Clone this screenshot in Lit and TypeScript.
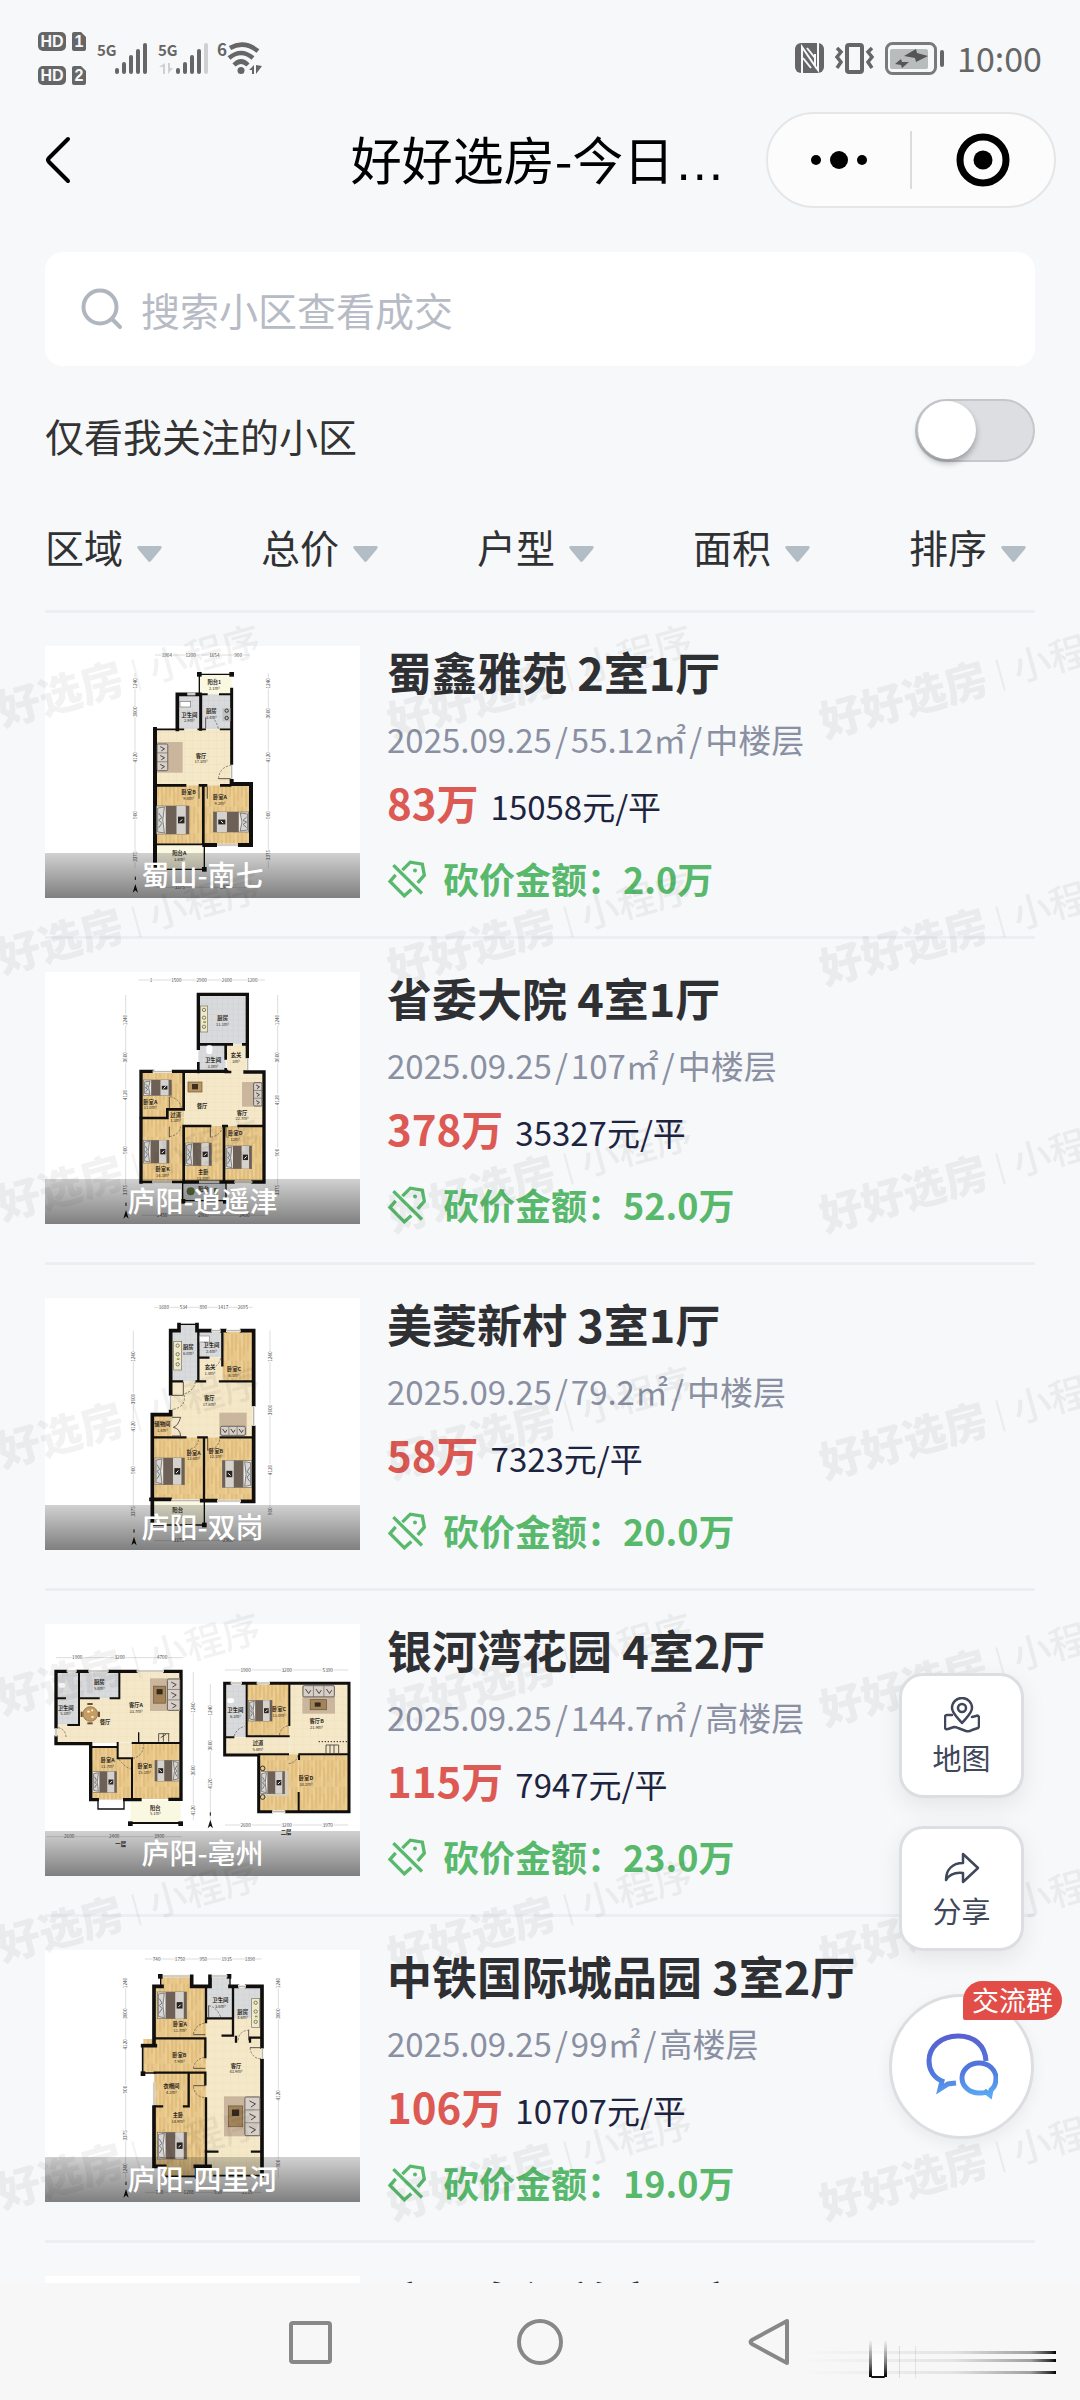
import { LitElement, html, svg, css, nothing } from "lit";
import { customElement, property, state } from "lit/decorators.js";

interface Listing {
  plan: string;
  place: string;
  title: string;
  date: string;
  area: string;
  floor: string;
  price: string;
  unit: string;
  cut: string;
}

const LISTINGS: Listing[] = [
  { plan: "shushan", place: "蜀山-南七", title: "蜀鑫雅苑 2室1厅", date: "2025.09.25", area: "55.12㎡", floor: "中楼层", price: "83万", unit: "15058元/平", cut: "2.0万" },
  { plan: "xiaoyao", place: "庐阳-逍遥津", title: "省委大院 4室1厅", date: "2025.09.25", area: "107㎡", floor: "中楼层", price: "378万", unit: "35327元/平", cut: "52.0万" },
  { plan: "shuanggang", place: "庐阳-双岗", title: "美菱新村 3室1厅", date: "2025.09.25", area: "79.2㎡", floor: "中楼层", price: "58万", unit: "7323元/平", cut: "20.0万" },
  { plan: "bozhou", place: "庐阳-亳州", title: "银河湾花园 4室2厅", date: "2025.09.25", area: "144.7㎡", floor: "高楼层", price: "115万", unit: "7947元/平", cut: "23.0万" },
  { plan: "silihe", place: "庐阳-四里河", title: "中铁国际城品园 3室2厅", date: "2025.09.25", area: "99㎡", floor: "高楼层", price: "106万", unit: "10707元/平", cut: "19.0万" },
  { plan: "", place: "", title: "文一名门首府 3室2厅", date: "", area: "", floor: "", price: "", unit: "", cut: "" },
];

type Fill = "wood" | "tile" | "wet" | "pale";
const room = (kind: Fill, x: number, y: number, w: number, h: number) =>
  svg`<rect x=${x} y=${y} width=${w} height=${h} fill=${`url(#${kind})`} />`;
const wall = (d: string, w = 10) =>
  svg`<path d=${d} stroke="#100f0d" stroke-width=${w} stroke-linecap="square" fill="none" />`;
const thin = (d: string) => svg`<path d=${d} stroke="#3c3a36" stroke-width="2.5" fill="none" />`;
const gap = (d: string) =>
  svg`<path d=${d} stroke="#f3f1ea" stroke-width="8" fill="none" /><path d=${d} stroke="#8b8983" stroke-width="2" fill="none" />`;
const arc = (d: string) =>
  svg`<path d=${d} stroke="#5b5142" stroke-width="2" stroke-dasharray="7 4" fill="none" />`;
const post = (x: number, y: number) => svg`<rect x=${x - 7} y=${y - 7} width="14" height="14" fill="#100f0d" />`;
const name = (x: number, y: number, text: string, size: string) => svg`
  <text x=${x} y=${y} class="room">${text}</text>
  <text x=${x} y=${y + 17} class="size">${size}</text>`;

/* Bed with its pillows on the left; flip puts them on the right. */
const bed = (x: number, y: number, w: number, h: number, flip = false) => svg`
  <g transform=${flip ? `translate(${x + w} ${y}) scale(-1 1)` : `translate(${x} ${y})`}>
    <rect width=${w} height=${h} fill="#ece9e4" stroke="#6f6a62" stroke-width="2" />
    <path d=${`M3 6 L${w * 0.24} 3 L${w * 0.19} ${h / 2} L${w * 0.24} ${h - 3} L3 ${h - 6} Z`} fill="#d8d6d2" stroke="#55524d" stroke-width="2" />
    <path d=${`M6 ${h * 0.25} L${w * 0.16} ${h * 0.42} L6 ${h * 0.5} L${w * 0.16} ${h * 0.62} L6 ${h * 0.78}`} fill="none" stroke="#6d7d8a" stroke-width="3" />
    <rect x=${w * 0.28} width=${w * 0.34} height=${h} fill="#6d6056" />
    <rect x=${w * 0.62} width=${w * 0.28} height=${h} fill="#d5d1cc" />
    <rect x=${w * 0.9} width=${w * 0.1} height=${h} fill="#6d6056" />
    <rect x=${w * 0.66} y=${h * 0.38} width=${w * 0.2} height=${h * 0.24} fill="#26221f" />
    <path d=${`M${w * 0.72} ${h * 0.56} l7 -7`} stroke="#fff" stroke-width="3" />
  </g>`;

/* Sofa on a rug; side tells which edge of the rug the sofa stands on. */
const sofa = (x: number, y: number, w: number, h: number, side: "left" | "right" | "top" | "bottom", table = false) => {
  const d = side === "left" || side === "right" ? w * 0.42 : h * 0.4;
  const b =
    side === "left" ? [x, y + 6, d, h - 12] :
    side === "right" ? [x + w - d, y + 2, d, h - 4] :
    side === "top" ? [x + 2, y, w - 4, d] : [x + 4, y + h - d, w - 8, d];
  const vertical = side === "left" || side === "right";
  return svg`
    <rect x=${x} y=${y} width=${w} height=${h} fill="#c9b69d" />
    <rect x=${b[0]} y=${b[1]} width=${b[2]} height=${b[3]} rx="4" fill="#d7cfc8" stroke="#55504c" stroke-width="2.5" />
    ${[1, 2].map((i) => vertical
      ? svg`<path d=${`M${b[0]} ${b[1] + (b[3] * i) / 3} h${b[2]}`} stroke="#6b6560" stroke-width="2" />`
      : svg`<path d=${`M${b[0] + (b[2] * i) / 3} ${b[1]} v${b[3]}`} stroke="#6b6560" stroke-width="2" />`)}
    ${[0, 1, 2].map((i) => vertical
      ? svg`<path d=${`M${b[0] + b[2] * 0.3} ${b[1] + b[3] * (i / 3 + 0.1)} l${b[2] * 0.4} ${b[3] * 0.08} l${-b[2] * 0.3} ${b[3] * 0.08}`} stroke="#4a4643" stroke-width="3" fill="none" />`
      : svg`<path d=${`M${b[0] + b[2] * (i / 3 + 0.08)} ${b[1] + b[3] * 0.3} l${b[2] * 0.1} ${b[3] * 0.4} l${b[2] * 0.07} ${-b[3] * 0.3}`} stroke="#4a4643" stroke-width="3" fill="none" />`)}
    ${table ? (vertical
      ? svg`<rect x=${x + w * 0.12} y=${y + h * 0.24} width=${w * 0.4} height=${h * 0.52} fill="#a2835a" stroke="#6b5336" stroke-width="2" /><rect x=${x + w * 0.22} y=${y + h * 0.33} width=${w * 0.2} height=${h * 0.16} fill="#33291f" />`
      : svg`<rect x=${x + w * 0.24} y=${y + h * 0.5} width=${w * 0.5} height=${h * 0.36} fill="#a2835a" stroke="#6b5336" stroke-width="2" /><rect x=${x + w * 0.38} y=${y + h * 0.6} width=${w * 0.18} height=${h * 0.15} fill="#33291f" />`) : nothing}`;
};

const stove = (x: number, y: number, w: number, h: number) => svg`
  <rect x=${x} y=${y} width=${w} height=${h} fill="#efe9c6" stroke="#77736a" stroke-width="2" />
  ${[0.15, 0.45, 0.8].map((t) => svg`<circle cx=${x + w / 2} cy=${y + h * t} r="5" fill="none" stroke="#4b4a45" stroke-width="2" />`)}
  <path d=${`M${x + w * 0.4} ${y + h * 0.62} h8`} stroke="#86a03c" stroke-width="5" />`;

/* Dimension chain along the top or the bottom edge. */
const across = (y: number, x1: number, x2: number, labels: string[]) => {
  const step = (x2 - x1) / labels.length;
  return svg`<path d=${`M${x1} ${y} H${x2}`} class="dim" />
    ${labels.map((t, i) => svg`<text x=${x1 + step * (i + 0.5)} y=${y + 5} class="mark">${t}</text>`)}`;
};
/* Dimension chain along the left or the right edge. */
const down = (x: number, y1: number, y2: number, marks: number[]) => svg`
  <path d=${`M${x} ${y1} V${y2}`} class="dim" />
  ${marks.map((y, i) => svg`<text transform=${`translate(${x + 5} ${y}) rotate(-90)`} class="mark">${["1240", "3600", "4120", "900", "3375"][i % 5]}</text>`)}`;
const north = (x: number, y: number) =>
  svg`<path d=${`M${x} ${y - 22} l8 26 l-8 -7 l-8 7 Z`} fill="#111" /><path d=${`M${x} ${y - 34} v-10`} stroke="#111" stroke-width="3" />`;

const PLANS: Record<string, { box: string; art: unknown }> = {
  shushan: {
    box: "135 78 945 756",
    art: svg`
      ${across(105, 465, 750, ["1904", "1200", "1654", "900"])}
      ${down(405, 160, 745, [190, 275, 412, 585, 710])}
      ${down(805, 160, 745, [190, 280, 412, 585, 705])}
      ${room("pale", 598, 163, 97, 60)}${room("wet", 532, 223, 70, 105)}${room("wet", 602, 223, 93, 105)}
      ${room("tile", 465, 328, 230, 168)}${room("wood", 465, 496, 145, 177)}${room("wood", 610, 496, 143, 180)}${room("pale", 465, 675, 148, 72)}
      ${wall("M598 163 H695 M598 163 V220", 4)}${post(598, 163)}${post(695, 163)}
      ${wall("M532 328 V223 H600", 11)}${wall("M695 208 V430 M602 225 V328", 9)}${wall("M605 223 H620 M660 223 H690", 6)}
      ${wall("M465 743 V327 M695 483 V492 H753 V675 H720 M645 675 H613", 12)}${wall("M470 496 H555 M600 496 H618 M664 496 H690 M610 496 V672", 8)}
      ${wall("M470 328 H550 M595 328 H615 M662 328 H690 M470 673 H605", 5)}${wall("M613 680 V748 H466", 4)}${post(613, 748)}
      ${gap("M562 222 H586")}${gap("M651 675 H714")}${gap("M695 436 V476")}
      ${arc("M655 476 Q660 440 694 436")}${arc("M655 326 Q650 305 640 295")}${thin("M655 476 H692 M617 292 V326 M622 500 V536 M597 500 V536")}
      <rect x="540" y="244" width="32" height="17" fill="#fff" stroke="#777" stroke-width="2" />
      <rect x="667" y="264" width="24" height="40" fill="#bfc2c3" /><circle cx="680" cy="272" r="5" class="ring" /><circle cx="680" cy="294" r="5" class="ring" />
      ${sofa(471, 366, 77, 92, "left")}${bed(470, 558, 97, 84)}${bed(640, 576, 106, 60, true)}
      ${name(643, 192, "阳台1", "2.1m²")}${name(568, 290, "卫生间", "2.9m²")}${name(634, 280, "厨房", "3.4m²")}
      ${name(603, 413, "客厅", "17.3m²")}${name(566, 522, "卧室B", "9.8m²")}${name(660, 538, "卧室A", "9.2m²")}${name(538, 706, "阳台A", "3.6m²")}
      ${across(802, 470, 745, ["3375", "2900"])}${north(406, 814)}`,
  },
  xiaoyao: {
    box: "45 66 945 756",
    art: svg`
      ${across(90, 325, 705, ["1", "1500", "2900", "2600", "1200"])}
      ${down(287, 135, 730, [210, 322, 435, 600, 720])}${down(743, 135, 730, [210, 322, 450, 608, 720])}
      ${room("wet", 505, 133, 148, 150)}${room("wet", 505, 283, 82, 83)}${room("tile", 590, 283, 62, 85)}
      ${room("tile", 460, 366, 244, 162)}${room("tile", 412, 478, 52, 50)}${room("wood", 333, 366, 128, 136)}${room("wood", 333, 504, 128, 190)}
      ${room("wood", 462, 528, 120, 166)}${room("wood", 583, 528, 118, 168)}${room("wet", 458, 698, 130, 56)}
      ${wall("M505 295 V133 H652 V320", 10)}${wall("M510 283 H605 M640 283 H650 M587 283 V325 M505 340 V366 M587 358 V366 H600", 8)}
      ${wall("M333 696 V364 H368 M430 364 H590 M645 366 H702 V696 H668 M583 696 H462 M610 696 H583", 10)}
      ${wall("M461 366 V478 H412 V504 H333 M461 528 H540 M580 528 H590 M626 528 H700 M461 528 V694 M582 528 V694 M333 696 H365 M430 696 H461", 8)}
      ${gap("M368 365 H426")}${gap("M653 325 V360")}${gap("M366 696 H426")}${gap("M507 696 H568")}${gap("M613 696 H667")}
      ${wall("M458 700 V752 H588 V700", 4)}${post(459, 754)}${post(586, 754)}
      ${arc("M418 560 Q448 555 452 530")}${arc("M542 562 Q572 556 578 530")}${arc("M590 562 Q624 556 626 530")}${arc("M420 440 Q450 446 455 478")}
      ${thin("M418 530 V562 M541 530 V562 M588 530 V560 M418 440 V476")}
      ${stove(511, 168, 22, 78)}<rect x="529" y="286" width="18" height="26" rx="6" fill="#fff" />
      <rect x="474" y="396" width="42" height="30" fill="#b99560" stroke="#6b5336" stroke-width="2" /><rect x="486" y="402" width="18" height="16" fill="#3c2f22" />
      ${sofa(636, 396, 60, 74, "right")}${bed(340, 390, 84, 46)}${bed(340, 571, 77, 68)}${bed(467, 579, 77, 68)}${bed(587, 588, 78, 68)}
      <circle cx="482" cy="724" r="12" fill="#5f7440" /><rect x="552" y="714" width="10" height="22" fill="#5f7440" />
      ${name(578, 210, "厨房", "11.1m²")}${name(549, 336, "卫生间", "3.0m²")}${name(618, 322, "玄关", "3m²")}${name(361, 461, "卧室A", "11.0m²")}
      ${name(437, 500, "过道", "1.3m²")}${name(516, 474, "餐厅", "")}${name(636, 494, "客厅", "22.7m²")}${name(398, 664, "卧室K", "14.1m²")}
      ${name(520, 672, "主卧", "13.0m²")}${name(616, 556, "卧室D", "12m²")}${name(521, 722, "阳台", "")}
      ${across(796, 335, 705, ["2450", "2900", "2400"])}${north(288, 802)}`,
  },
  shuanggang: {
    box: "45 52 945 756",
    art: svg`
      ${across(80, 372, 668, ["1680", "534", "890", "1417", "2695"])}
      ${down(310, 150, 700, [228, 355, 437, 568, 692])}${down(720, 150, 700, [228, 388, 568, 692])}
      ${room("wet", 422, 148, 82, 155)}${room("wet", 450, 132, 50, 20)}${room("wet", 504, 148, 72, 82)}${room("tile", 504, 230, 72, 73)}${room("wood", 577, 148, 92, 154)}
      ${room("tile", 422, 302, 248, 168)}${room("wood", 368, 404, 56, 66)}${room("wood", 368, 470, 154, 190)}${room("wood", 524, 470, 146, 190)}${room("pale", 366, 662, 160, 70)}
      ${wall("M422 340 V150 H447 V132 M501 132 V150 H540 M575 150 H585 M635 150 H671 V372 M671 440 V662 H636", 11)}${wall("M450 131 H500", 4)}
      ${wall("M505 150 V300 M577 150 V254 M505 231 H535 M427 302 H456 M500 302 H525 M570 302 H668", 7)}
      ${wall("M422 392 V402 H367 V730 M363 656 H420 M515 660 H558", 11)}${wall("M370 470 H466 M505 470 H530 M572 470 H668 M522 470 V656", 7)}
      ${wall("M368 733 H523 V664", 4)}${post(523, 733)}${gap("M544 150 H572")}${gap("M588 150 H632")}${gap("M422 345 V388")}${gap("M671 376 V436")}${gap("M424 660 H508")}${gap("M561 661 H633")}
      ${arc("M430 386 Q470 378 462 340 Q492 330 496 304")}${arc("M470 508 Q504 504 506 472")}${arc("M534 508 Q566 504 570 472")}${arc("M536 262 Q566 262 572 232")}
      ${thin("M460 304 V344 H426 M426 410 h26 q-8 26 -22 30 q20 4 22 26 h-26 M533 472 V510")}
      ${stove(431, 182, 24, 86)}<rect x="508" y="166" width="30" height="18" fill="#fff" stroke="#888" stroke-width="2" />
      ${sofa(568, 396, 82, 68, "bottom")}${bed(375, 532, 88, 80)}${bed(577, 540, 88, 80, true)}
      ${name(475, 206, "厨房", "6.0m²")}${name(544, 200, "卫生间", "2.4m²")}${name(540, 266, "玄关", "1.8m²")}${name(612, 272, "卧室C", "6.1m²")}
      ${name(538, 358, "客厅", "17.6m²")}${name(397, 437, "储物间", "1.4m²")}${name(491, 522, "卧室A", "12.6m²")}${name(558, 516, "卧室B", "12.1m²")}${name(443, 694, "阳台", "3.7m²")}
      ${across(780, 372, 668, ["3375", "2900"])}${north(312, 790)}`,
  },
  bozhou: {
    box: "45 71 945 756",
    art: svg`
      ${across(172, 78, 460, ["1900", "3200", "4700"])}${across(209, 585, 955, ["1900", "3200", "5390"])}
      ${down(490, 215, 660, [322, 510, 630])}${down(541, 250, 660, [330, 435, 550])}
      ${room("wet", 80, 215, 66, 158)}${room("wet", 148, 215, 122, 80)}${room("tile", 270, 215, 180, 212)}${room("tile", 148, 294, 124, 134)}${room("tile", 80, 373, 70, 55)}
      ${room("wood", 184, 440, 122, 158)}${room("tile", 262, 428, 44, 48)}${room("wood", 306, 428, 146, 168)}${room("pale", 302, 600, 150, 70)}
      ${room("wet", 584, 250, 66, 160)}${room("wood", 650, 250, 128, 160)}${room("tile", 778, 250, 178, 212)}${room("tile", 584, 411, 194, 50)}${room("wood", 686, 462, 120, 170)}${room("wood", 806, 462, 148, 170)}
      ${wall("M78 380 V213 H108 M142 213 H172 M238 213 H318 M404 213 H453 V597 H420 M78 410 V430 H182 V598 H202 M284 598 H330", 10)}
      ${wall("M147 215 V373 M82 294 H105 M148 294 H206 M242 294 H268 V215 M115 374 H147 M263 428 V474 H306 M308 428 H450 M306 480 V596 M184 440 H262", 6)}
      ${wall("M326 398 V426", 4)}${wall("M204 604 V626 H282 V604", 4)}${wall("M302 668 H452", 6)}${post(301, 670)}${post(452, 670)}
      ${gap("M110 212 H140")}${gap("M175 212 H236")}${gap("M320 212 H402")}${gap("M78 384 V408")}
      ${wall("M584 462 V249 H600 M638 249 H678 M722 249 H957 V634 H768 M724 634 H686 V464 H584", 9)}
      ${wall("M650 252 V408 H776 M586 411 H610 M778 254 V374 M688 462 H774 M808 462 H954 M807 466 V476 M806 578 V630", 6)}
      ${gap("M602 248 H636")}${gap("M680 248 H720")}${gap("M726 634 H766")}
      ${thin("M386 400 V424 M400 400 V424 M416 400 V424 M386 400 H418 M392 412 L408 402 M888 434 H926 V458 M888 434 V458 M900 434 V458 M912 434 V458")}
      <path d="M866 424 H952" stroke="#222" stroke-width="3" stroke-dasharray="4 5" />
      ${arc("M84 382 Q106 386 108 410")}${arc("M266 476 Q290 506 302 504")}${arc("M308 474 Q340 468 340 432")}${arc("M776 490 Q800 486 804 464")}${arc("M748 404 Q752 380 776 376")}${arc("M612 408 Q620 384 644 378")}
      ${sofa(360, 234, 90, 98, "right", true)}${sofa(817, 256, 98, 84, "top", true)}${bed(188, 514, 72, 62)}${bed(375, 480, 72, 62, true)}${bed(656, 300, 70, 62)}
      <rect x="690" y="512" width="86" height="76" fill="#d9cdb8" />${bed(692, 514, 72, 66)}
      <circle cx="698" cy="504" r="7" class="ring" /><circle cx="698" cy="590" r="7" class="ring" />
      <rect x="172" y="308" width="16" height="6" fill="#6b4f33" /><rect x="172" y="366" width="16" height="6" fill="#6b4f33" /><rect x="152" y="334" width="6" height="16" fill="#6b4f33" /><rect x="204" y="334" width="6" height="16" fill="#6b4f33" />
      <circle cx="181" cy="341" r="22" fill="#c79c60" stroke="#7d5e36" stroke-width="2" /><path d="M172 334 h7 M184 350 h7 M184 330 h5" stroke="#fff" stroke-width="5" />
      <rect x="86" y="248" width="20" height="14" rx="5" fill="#fff" /><rect x="592" y="294" width="20" height="14" rx="5" fill="#fff" />
      ${name(107, 328, "卫生间", "5.3m²")}${name(208, 252, "厨房", "5.8m²")}${name(318, 320, "客厅A", "33.7m²")}${name(225, 372, "餐厅", "")}
      ${name(233, 486, "卧室A", "11.7m²")}${name(344, 504, "卧室B", "15.1m²")}${name(376, 628, "阳台", "5.1m²")}
      ${name(616, 336, "卫生间", "6.3m²")}${name(747, 332, "卧室C", "11.0m²")}${name(860, 368, "客厅B", "21.9m²")}${name(684, 434, "过道", "5.6m²")}${name(828, 540, "卧室D", "30.2m²")}
      ${across(709, 50, 455, ["2600", "2400", "3900"])}${across(674, 585, 955, ["2600", "3200", "3970"])}
      <text x="272" y="736" class="room">一层</text><text x="768" y="702" class="room">二层</text>${north(541, 680)}`,
  },
  silihe: {
    box: "45 59 945 756",
    art: svg`
      ${across(86, 345, 695, ["740", "1750", "950", "1935", "1890"])}
      ${down(287, 140, 745, [158, 250, 342, 478, 615, 715])}${down(745, 140, 745, [158, 250, 495, 700])}
      ${room("wood", 372, 172, 156, 152)}${room("wood", 392, 138, 94, 36)}${room("wood", 340, 326, 188, 102)}${room("wood", 372, 428, 156, 284)}${room("wood", 404, 704, 92, 32)}
      ${room("wet", 540, 138, 58, 34)}${room("wet", 530, 170, 78, 92)}${room("wet", 612, 170, 84, 150)}${room("tile", 528, 262, 168, 404)}${room("tile", 612, 320, 84, 40)}${room("tile", 528, 664, 168, 74)}
      ${wall("M372 344 V168 H396 M485 138 V168 H540 V138 M600 168 H622 M650 168 H696 V350 M696 390 V736", 11)}${wall("M392 137 H486 M542 137 H598 M392 137 V166 M600 137 V166", 4)}${post(391, 138)}${post(597, 138)}
      ${wall("M528 172 V275 M530 264 H604 M609 172 V316 H578 M618 320 V334 M660 334 V322 H692 M374 324 H526 M526 324 V380 M374 427 H526 V462 M476 430 V528 H462 M376 528 H396 M528 504 V664 H562 M666 664 H694", 7)}
      ${wall("M376 346 H338", 11)}${wall("M338 350 V428 H374", 5)}${post(339, 430)}${wall("M372 530 V708 H404 M496 708 H540 M500 712 V740", 11)}${wall("M528 662 V706", 7)}${wall("M408 738 H496 M552 736 H694", 5)}
      ${gap("M372 456 V524")}${gap("M624 168 H648")}${gap("M697 354 V386")}${gap("M398 137 H480")}${gap("M545 137 H592")}
      ${arc("M490 312 Q496 282 526 278")}${arc("M490 414 Q494 386 526 380")}${arc("M490 468 Q494 500 526 502")}${arc("M536 226 Q560 230 572 260")}${arc("M624 330 Q628 300 656 300")}${arc("M660 352 Q664 384 694 386")}
      ${thin("M490 313 H526 M490 414 H526 M490 466 H526 M660 352 H694 M656 298 V330 M536 226 V260")}
      ${bed(382, 185, 88, 80)}${bed(382, 606, 88, 80)}${stove(665, 204, 24, 88)}
      ${sofa(582, 498, 108, 120, "right", true)}
      ${name(450, 288, "卧室A", "11.7m²")}${name(448, 380, "卧室B", "7.9m²")}${name(424, 474, "衣帽间", "4.2m²")}${name(444, 560, "主卧", "14.9m²")}
      ${name(571, 216, "卫生间", "3.6m²")}${name(638, 250, "厨房", "4.6m²")}${name(618, 412, "客厅", "43.9m²")}
      ${across(786, 345, 695, ["740", "1208", "950", "2155"])}${north(288, 798)}`,
  },
};

@customElement("floor-plan")
class FloorPlan extends LitElement {
  static styles = css`
    :host { display: block; }
    .plan { display: block; width: 100%; height: 100%; }
    .room, .size, .mark { font-family: "Noto Sans CJK SC", sans-serif; text-anchor: middle; }
    .room { font-size: 16px; font-weight: 700; fill: #2a2620; }
    .size { font-size: 12px; fill: #2b2721; }
    .mark { font-size: 14px; fill: #4a4a4a; stroke: #fff; stroke-width: 5px; paint-order: stroke; }
    .dim { stroke: #cccccc; stroke-width: 2; fill: none; }
    .ring { fill: none; stroke: #33312e; stroke-width: 3; }
  `;
  @property() plan = "";

  render() {
    const p = PLANS[this.plan];
    if (!p) return nothing;
    return html`<svg class="plan" viewBox=${p.box} aria-hidden="true">
      <defs>
        <pattern id="wood" width="36" height="80" patternUnits="userSpaceOnUse">
          <rect width="36" height="80" fill="#e7c78a" />
          <path d="M6 0 V50 M18 20 V80 M30 0 V64" stroke="#dbb672" stroke-width="3" />
          <path d="M12 30 V80 M24 0 V40" stroke="#efd296" stroke-width="4" />
        </pattern>
        <pattern id="tile" width="24" height="24" patternUnits="userSpaceOnUse">
          <rect width="24" height="24" fill="#f4e8c8" />
          <path d="M0 0 H24 M0 0 V24" stroke="#ecddb8" stroke-width="2" />
        </pattern>
        <pattern id="wet" width="16" height="16" patternUnits="userSpaceOnUse">
          <rect width="16" height="16" fill="#d8dadc" />
          <path d="M0 0 H16 M0 0 V16" stroke="#cbced1" stroke-width="2" />
        </pattern>
        <pattern id="pale" width="16" height="16" patternUnits="userSpaceOnUse">
          <rect width="16" height="16" fill="#fbf8e2" />
        </pattern>
      </defs>
      ${p.art}
    </svg>`;
  }
}

@customElement("listing-row")
class ListingRow extends LitElement {
  static styles = css`
    :host { display: block; }
    .row { display: flex; gap: 27px; padding: 33px 0 38px; border-bottom: 3px solid #eceef1; color: inherit; text-decoration: none; }
    .photo { position: relative; flex: none; width: 315px; height: 252px; background: #fff; overflow: hidden; }
    .art { width: 100%; height: 100%; }
    .caption {
      position: absolute; inset: auto 0 0 0; height: 45px; line-height: 42px; text-align: center;
      font-size: 28px; font-weight: 500; color: #fff;
      background: linear-gradient(rgba(0, 0, 0, 0.18), rgba(0, 0, 0, 0.5));
    }
    .info { flex: 1; min-width: 0; display: flex; flex-direction: column; }
    .title { margin: 0 0 20px; font-size: 45px; line-height: 52px; font-weight: 700; color: #2f3033; white-space: nowrap; }
    .meta { display: flex; gap: 3px; margin-bottom: 18px; font-size: 33px; line-height: 42px; color: #8a90a2; white-space: nowrap; }
    .money { display: flex; align-items: baseline; gap: 12px; height: 48px; margin-bottom: 32px; line-height: 48px; white-space: nowrap; }
    .price { font-size: 42px; font-weight: 700; color: #dd5a54; }
    .unit { font-size: 33px; color: #1c2440; }
    .cut { display: flex; align-items: center; gap: 16px; font-size: 36px; line-height: 40px; font-weight: 700; color: #58b96c; white-space: nowrap; }
    .tag { flex: none; width: 40px; height: 39px; }
  `;
  @property({ attribute: false }) item!: Listing;

  render() {
    const i = this.item;
    return html`<a class="row" href="#listing">
      <div class="photo">
        <floor-plan class="art" .plan=${i.plan}></floor-plan>
        ${i.place ? html`<div class="caption">${i.place}</div>` : nothing}
      </div>
      <div class="info">
        <h2 class="title">${i.title}</h2>
        ${i.date ? html`
          <div class="meta"><span>${i.date}</span><span>/</span><span>${i.area}</span><span>/</span><span>${i.floor}</span></div>
          <div class="money"><span class="price">${i.price}</span><span class="unit">${i.unit}</span></div>
          <div class="cut">
            <svg class="tag" viewBox="26 28 120 116" fill="none" stroke="currentColor" stroke-width="10" aria-hidden="true">
              <path d="M72 61 L96 37 L132 43 L138 76 L118 99" />
              <path d="M52 75 L35 95 L78 138 L99 119" />
              <path d="M45 46 L131 131" />
              <circle cx="110" cy="62" r="6" fill="currentColor" stroke="none" />
            </svg>
            <span>砍价金额：${i.cut}</span>
          </div>` : nothing}
      </div>
    </a>`;
  }
}

@customElement("app-root")
class AppRoot extends LitElement {
  static styles = css`
    :host {
      display: block;
      font-family: "Noto Sans CJK SC", "Noto Sans", sans-serif;
      color: #333;
    }
    button, input { font: inherit; color: inherit; border: 0; background: none; padding: 0; margin: 0; }
    .app { position: relative; display: flex; flex-direction: column; height: 100vh; overflow: hidden; background: #f7f8fa; }
    .status { flex: none; display: flex; justify-content: space-between; align-items: center; box-sizing: border-box; height: 112px; padding: 4px 38px 0; color: #666; }
    .status-end { display: flex; align-items: center; gap: 12px; font-size: 34px; line-height: 40px; }
    .glyphs { display: block; }
    .badge-text { font-family: "Liberation Sans", sans-serif; font-weight: 700; fill: #f7f8fa; text-anchor: middle; }
    .net-text { font-family: "Noto Sans CJK SC", sans-serif; font-weight: 700; fill: #666; }

    .head { flex: none; display: grid; grid-template-columns: 1fr auto 1fr; align-items: center; padding: 0 24px 0 40px; }
    .back { justify-self: start; width: 36px; height: 60px; }
    .heading { margin: 0; padding-right: 20px; font-size: 51px; line-height: 60px; font-weight: 400; color: #000; white-space: nowrap; }
    .dots { font-family: "Liberation Sans", sans-serif; }
    .capsule { justify-self: end; display: flex; align-items: center; box-sizing: border-box; width: 290px; height: 96px; border: 2px solid #e5e6e8; border-radius: 48px; background: #fcfcfd; }
    .capsule-btn { flex: 1; display: flex; align-items: center; justify-content: center; height: 100%; }
    .split { width: 2px; height: 58px; background: #dcdcde; }

    .tools { flex: none; padding: 44px 45px 0; }
    .search { display: flex; align-items: center; gap: 18px; height: 114px; padding: 0 36px; border-radius: 18px; background: #fff; }
    .field { flex: 1; min-width: 0; font-size: 39px; line-height: 56px; outline: none; }
    .field::placeholder { color: #b7bbc5; opacity: 1; }
    .follow { display: flex; align-items: flex-end; justify-content: space-between; margin-top: 33px; font-size: 39px; line-height: 54px; }
    .switch { appearance: none; position: relative; box-sizing: border-box; width: 120px; height: 63px; border: 2px solid #c6c7cb; border-radius: 32px; background: #dddee2; }
    .switch::before { content: ""; position: absolute; left: 1px; top: 0; width: 58px; height: 58px; border-radius: 50%; background: #fff; box-shadow: 0 4px 6px rgba(0, 0, 0, 0.3); }
    .switch:checked { background: #58b96c; }
    .switch:checked::before { left: 57px; }
    .filters { display: flex; justify-content: space-between; margin-top: 56px; padding-bottom: 36px; border-bottom: 3px solid #eceef1; }
    .filter { display: flex; align-items: flex-end; gap: 14px; padding-right: 9px; font-size: 39px; line-height: 56px; color: #303133; }
    .caret { flex: none; margin-bottom: 12px; }

    .list { position: relative; flex: 1; min-height: 0; overflow: hidden; }
    .rows { list-style: none; margin: 0; padding: 0 45px; }
    .watermark { position: absolute; inset: 0; width: 100%; height: 100%; pointer-events: none; }
    .wm-name { font-size: 43px; font-weight: 900; }
    .wm-kind { font-size: 38px; font-weight: 500; }

    .float { position: absolute; right: 46px; bottom: 261px; display: flex; flex-direction: column; align-items: center; }
    .tile {
      display: flex; flex-direction: column; align-items: center; justify-content: center; gap: 6px; box-sizing: border-box;
      width: 125px; height: 125px; margin-bottom: 28px; border: 3px solid #dcdee1; border-radius: 24px; background: #fff;
      font-size: 29px; line-height: 36px; color: #40475a; box-shadow: 0 8px 24px rgba(0, 0, 0, 0.08);
    }
    .chat {
      position: relative; display: flex; align-items: center; justify-content: center; box-sizing: border-box; width: 145px; height: 145px;
      margin-top: 15px; border: 3px solid #dcdee1; border-radius: 50%; background: #fff; box-shadow: 0 6px 16px rgba(0, 0, 0, 0.06);
    }
    .pill { position: absolute; left: 71px; top: -16px; width: 99px; height: 39px; line-height: 37px; border-radius: 20px 20px 20px 2px; background: #e24d48; color: #fff; font-size: 27px; text-align: center; white-space: nowrap; }

    .system { position: relative; flex: none; display: flex; justify-content: center; height: 117px; background: #f7f7f7; }
    .key { display: flex; align-items: center; justify-content: center; width: 230px; height: 117px; }
    .streaks { position: absolute; right: 24px; bottom: 18px; }
  `;

  @state() private followed = false;

  private statusStart() {
    const bars = (x: number, faded: boolean) =>
      [6, 12, 19, 25, 31].map((h, i) => svg`<rect x=${x + i * 7} y=${76 - h} width="4" height=${h} rx="2" fill=${faded && i === 4 ? "#cfd0d1" : "#666"} />`);
    return html`<svg class="glyphs" width="226" height="60" viewBox="38 30 226 60" fill="#666" role="img" aria-label="信号">
      ${[0, 34].map((dy, i) => svg`
        <rect x="38" y=${34 + dy} width="28" height="19" rx="5" />
        <text class="badge-text" x="52" y=${49 + dy} font-size="16">HD</text>
        <path d=${`M74 ${34 + dy} h7 l5 5 v12 q0 2 -2 2 h-10 q-2 0 -2 -2 v-15 q0 -2 2 -2 Z`} />
        <text class="badge-text" x="79" y=${49 + dy} font-size="16">${i + 1}</text>`)}
      <text class="net-text" x="97" y="58" font-size="15">5G</text>${bars(115, false)}
      <text class="net-text" x="158" y="58" font-size="15">5G</text>${bars(176, true)}
      <path d="M165 65 v11 h-2 v-7 h-4 Z M168 65 v11 l5 -6 h-3 v-5 Z" fill="#cfd0d1" />
      <text class="net-text" x="217" y="58" font-size="17">6</text>
      <g fill="none" stroke="#666" stroke-width="4.5">
        <path d="M230 50 Q244 42 258 53" /><path d="M229 60 Q241 50 253 60" /><path d="M234 67 Q241 60 248 67" />
      </g>
      <circle cx="241" cy="72.500" r="3.500" />
      <path d="M254 67 v9 h-2 v-4 h-3 Z M256 67 v9 l6 -8 Z" />
    </svg>`;
  }

  private statusEnd() {
    return html`<div class="status-end">
      <svg class="glyphs" width="152" height="36" viewBox="794 42 152 36" fill="#666" role="img" aria-label="电池">
        <rect x="796" y="45" width="29" height="30" rx="6" />
        <path d="M803 75 V49 L816 68 V56 M816 68 V60 L808 50 M804 60 L812 70 M819 45 V72 L816 68" fill="none" stroke="#f7f8fa" stroke-width="2" />
        <rect x="848" y="47" width="15" height="27" rx="2" fill="none" stroke="#666" stroke-width="4" />
        <path d="M838 50 l4 4 l-4 5 l4 5 l-4 6 M873 50 l-4 4 l4 5 l-4 5 l4 6" fill="none" stroke="#666" stroke-width="3.500" />
        <rect x="887.500" y="45.500" width="49" height="30" rx="6" fill="none" stroke="#7a7a7a" stroke-width="3" />
        <rect x="891" y="51" width="38" height="20" rx="2" fill="#b9bcbc" />
        <path d="M896 66 l6 -5 l1 3 l7 0 l-7 6 l-1 -3 Z M905 58 l12 -7 l1 4 l11 3 l-12 6 l-1 -4 Z" fill="#555" />
        <rect x="941" y="52" width="4" height="17" rx="2" />
      </svg>
      <span>10:00</span>
    </div>`;
  }

  private watermark() {
    return html`<svg class="watermark" aria-hidden="true">
      <defs>
        <pattern id="wm" x="372" y="0" width="432" height="247" patternUnits="userSpaceOnUse">
          <g transform="translate(37 104) rotate(-15.5)" fill="#000" fill-opacity="0.05">
            <text class="wm-name" x="-21" y="16">好好选房</text>
            <rect x="164" y="-14" width="2" height="32" />
            <text class="wm-kind" x="179" y="14">小程序</text>
          </g>
        </pattern>
      </defs>
      <rect width="100%" height="100%" fill="url(#wm)" />
    </svg>`;
  }

  render() {
    return html`<div class="app">
      <div class="status">${this.statusStart()}${this.statusEnd()}</div>
      <header class="head">
        <button class="back" aria-label="返回">
          <svg class="glyphs" width="36" height="60" viewBox="40 136 36 60" fill="none" stroke="#000" stroke-width="4" stroke-linecap="round" stroke-linejoin="round"><path d="M68 145 L49 164 Q47 166 49 168 L68 187" /></svg>
        </button>
        <h1 class="heading">好好选房-今日<span class="dots">…</span></h1>
        <div class="capsule">
          <button class="capsule-btn" aria-label="更多">
            <svg class="glyphs" width="60" height="20" viewBox="0 0 60 20"><circle cx="7" cy="10" r="5" /><circle cx="30" cy="10" r="9" /><circle cx="53" cy="10" r="5" /></svg>
          </button>
          <span class="split"></span>
          <button class="capsule-btn" aria-label="关闭">
            <svg class="glyphs" width="54" height="54" viewBox="0 0 54 54"><circle cx="27" cy="27" r="23" fill="none" stroke="#000" stroke-width="7" /><circle cx="27" cy="27" r="9.500" /></svg>
          </button>
        </div>
      </header>

      <section class="tools">
        <label class="search">
          <svg class="glyphs" width="42" height="42" viewBox="0 0 42 42" fill="none" stroke="#b0b6c0" stroke-width="4" stroke-linecap="round"><circle cx="19" cy="19" r="16.500" /><path d="M31 31 L39 39" /></svg>
          <input class="field" type="search" placeholder="搜索小区查看成交" aria-label="搜索小区查看成交" />
        </label>
        <div class="follow">
          <label for="followed">仅看我关注的小区</label>
          <input id="followed" class="switch" type="checkbox" role="switch" .checked=${this.followed}
            @change=${(e: Event) => { this.followed = (e.target as HTMLInputElement).checked; }} />
        </div>
        <nav class="filters" aria-label="筛选">
          ${["区域", "总价", "户型", "面积", "排序"].map((f) => html`<button class="filter">${f}
            <svg class="caret" width="25" height="16" viewBox="0 0 25 16" fill="#b3bdc5"><path d="M2 0 H23 Q26 0 24 3 L14 15 Q12 17 11 15 L1 3 Q-1 0 2 0 Z" /></svg></button>`)}
        </nav>
      </section>

      <main class="list">
        <ul class="rows">
          ${LISTINGS.map((i) => html`<li><listing-row .item=${i}></listing-row></li>`)}
        </ul>
        ${this.watermark()}
      </main>

      <aside class="float">
        <button class="tile">
          <svg class="glyphs" width="36" height="36" viewBox="0 0 36 36" fill="none" stroke="#40475a" stroke-width="2.500" stroke-linejoin="round" stroke-linecap="round">
            <path d="M18 26 C13 20 8 16 8 11 A10 10 0 0 1 28 11 C28 16 23 20 18 26 Z" /><circle cx="18" cy="11" r="4" />
            <path d="M8 18 L3 18 Q1 18 1 20 V31 Q2 33 4 32 L10 30 Q12 30 14 31 L22 34 Q25 35 28 33 L34 31 Q35 30 35 29 V20 Q34 18 32 19 L28 20" />
          </svg>
          <span>地图</span>
        </button>
        <button class="tile">
          <svg class="glyphs" width="36" height="36" viewBox="0 0 36 36" fill="none" stroke="#40475a" stroke-width="2.500" stroke-linejoin="round">
            <path d="M19 4 L34 18 L19 32 V23 C10 22 5 25 2 30 C2 20 8 13 19 13 Z" />
          </svg>
          <span>分享</span>
        </button>
        <button class="chat" aria-label="交流群">
          <svg class="glyphs" width="72" height="68" viewBox="0 0 72 68" fill="none" stroke="url(#blue)" stroke-width="5">
            <defs><linearGradient id="blue" gradientUnits="userSpaceOnUse" x1="30" y1="0" x2="36" y2="64"><stop offset="0" stop-color="#5a5fd0" /><stop offset="0.6" stop-color="#5078dc" /><stop offset="1" stop-color="#58a8f4" /></linearGradient></defs>
            <path d="M60 28 C59 12 48 3 32 3 C15 3 3 14 3 28 C3 37 8 45 16 48 L14 56 L22 51 L30 50" />
            <path d="M65 57 C69 54 70 50 70 45 A17 15 0 1 0 53 60 C56 60 59 60 60 59 L64 62 Z" />
          </svg>
          <span class="pill">交流群</span>
        </button>
      </aside>

      <footer class="system">
        <button class="key" aria-label="最近任务"><svg class="glyphs" width="46" height="46" viewBox="0 0 46 46" fill="none" stroke="#888" stroke-width="4"><rect x="4" y="4" width="39" height="39" rx="2" /></svg></button>
        <button class="key" aria-label="主页"><svg class="glyphs" width="46" height="46" viewBox="0 0 46 46" fill="none" stroke="#888" stroke-width="4"><circle cx="23" cy="23" r="21" /></svg></button>
        <button class="key" aria-label="后退"><svg class="glyphs" width="46" height="46" viewBox="0 0 46 46" fill="none" stroke="#888" stroke-width="4" stroke-linejoin="round"><path d="M40 2 V44 L5 25 Q2 23 5 21 Z" /></svg></button>
        <svg class="streaks" width="256" height="44" viewBox="0 0 256 44" aria-hidden="true">
          <defs>
            <linearGradient id="sx" gradientUnits="userSpaceOnUse" x1="0" x2="256" y1="0" y2="0"><stop offset="0" stop-color="#000" stop-opacity="0" /><stop offset="0.6" stop-color="#000" stop-opacity="0.08" /><stop offset="0.9" stop-color="#000" stop-opacity="0.35" /><stop offset="0.98" stop-color="#000" stop-opacity="0.8" /><stop offset="1" stop-color="#000" /></linearGradient>
            <linearGradient id="sy" x1="0" x2="0" y1="0" y2="1"><stop offset="0" stop-color="#000" stop-opacity="0" /><stop offset="0.6" stop-color="#000" stop-opacity="0.5" /><stop offset="1" stop-color="#000" /></linearGradient>
            <linearGradient id="sf" x1="0" x2="0" y1="0" y2="1"><stop offset="0" stop-color="#fff" stop-opacity="0" /><stop offset="0.5" stop-color="#fff" stop-opacity="0.9" /><stop offset="1" stop-color="#fff" /></linearGradient>
          </defs>
          <rect y="13" width="256" height="3" fill="url(#sx)" /><rect y="21" width="256" height="3" fill="url(#sx)" /><rect y="33" width="256" height="3" fill="url(#sx)" />
          <rect x="71" y="4" width="15" height="35" fill="url(#sf)" />
          <rect x="69" y="2" width="3" height="37" fill="url(#sy)" /><rect x="84" y="2" width="3" height="37" fill="url(#sy)" />
          <rect x="71" y="38" width="14" height="2" rx="1" fill="#111" />
          <rect x="99" y="8" width="1" height="32" fill="#000" fill-opacity="0.1" /><rect x="115" y="8" width="1" height="32" fill="#000" fill-opacity="0.08" />
        </svg>
      </footer>
    </div>`;
  }
}
